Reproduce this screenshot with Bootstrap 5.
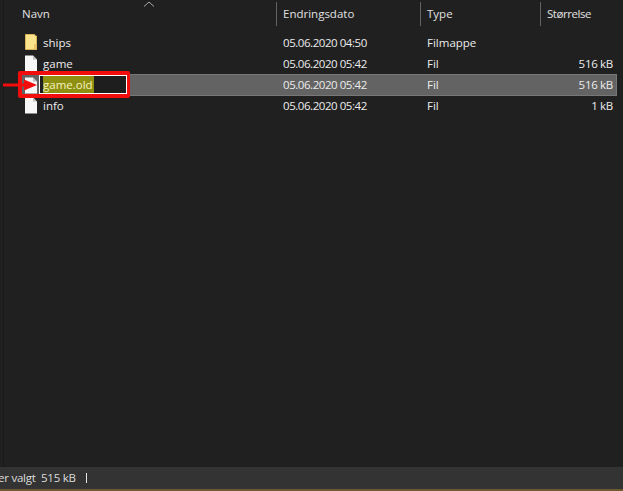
<!DOCTYPE html>
<html lang="no">
<head>
<meta charset="utf-8">
<title>Explorer</title>
<link href="https://cdn.jsdelivr.net/npm/bootstrap@5.3.0/dist/css/bootstrap.min.css" rel="stylesheet">
<style>
html,body{height:100%;margin:0;overflow:hidden}
body{background:#202020;color:#ececec;font:11.5px/1 "Open Sans",sans-serif}
.shell{height:491px;width:623px}
.main-area{flex:1 1 auto;border-left:1px solid #191919;margin-left:3px;position:relative;min-height:0}
.head-row{height:26px;padding-top:2px;color:#e0e0e0}
.cname{width:272px;padding-left:18px}
.cdate{width:144px;padding-left:6px}
.ctype{width:120px;padding-left:6px}
.csize{width:72px;padding-left:6px}
.sep{border-left:1px solid #636363}
.head-cell{height:24px;display:flex;align-items:center}
.head-cell.csize{letter-spacing:-.45px}
.rows{margin-top:6px}
.frow{height:21px;display:flex;align-items:center;width:613px}
.frow .cname{display:flex;align-items:center;padding-left:19px;width:279px;height:100%;flex:none}
.frow .cdate{width:144px;padding-left:0;letter-spacing:-.45px;flex:none}
.frow .ctype{width:120px;padding-left:0;flex:none}
.frow .csize{width:66px;padding:0;text-align:right;letter-spacing:-.3px;flex:none}
.frow.sel{background:#636363;box-shadow:inset 0 0 0 1px #777;margin-left:16px;width:597px;height:22px;margin-bottom:-1px}
.frow.sel .cname{padding-left:3px;width:263px}
.fname{margin-left:5px}
.icon{width:15px;height:17px;flex:none}
.rename{width:88px;height:19px;background:#1e1e1e;border:1px solid #fff;margin-left:1px;display:flex;align-items:center;padding-left:3px;align-self:flex-start;margin-top:1px}
.hl{background:#8f8f12;color:#f4f4c0;line-height:17px;padding:0 1px 0 0}
.redbox{position:absolute;left:18px;top:71px;width:112px;height:27px;border:4px solid #f20d0d;border-right-width:3px;border-radius:2px}
.arrowmark{position:absolute;left:0;top:79px;width:40px;height:12px}
.sort-mark{position:absolute;left:139px;top:1px;width:12px;height:6px}
.status{height:22px;flex:none;background:#333;color:#dcdcdc;overflow:hidden;white-space:nowrap}
.status-txt{margin-left:-2px;letter-spacing:-.25px}
.status-bar{width:1px;height:10px;background:#e6e6e6;margin-left:10px}
.bottom-edge{height:2px;flex:none;background:#6e5a30}
</style>
</head>
<body>
<div class="shell d-flex flex-column">
  <div class="main-area">
    <svg class="sort-mark" viewBox="0 0 12 6"><path d="M1 5.500 6 1l5 4.500" fill="none" stroke="#a8a8a8"/></svg>
    <div class="head-row d-flex">
      <div class="cname head-cell">Navn</div>
      <div class="cdate head-cell sep">Endringsdato</div>
      <div class="ctype head-cell sep">Type</div>
      <div class="csize head-cell sep">Størrelse</div>
    </div>
    <div class="rows">
      <div class="frow">
        <div class="cname"><svg class="icon" viewBox="0 0 15 17"><path d="M2.500.5h9l1 1.500h1v13.500h-11z" fill="#fde48c" stroke="#dcb45a"/><path d="M11.500 10.500h2v5h-2z" fill="#f0cb6a" stroke="#dcb45a" stroke-width=".6"/></svg><span class="fname">ships</span></div>
        <div class="cdate">05.06.2020 04:50</div><div class="ctype">Filmappe</div><div class="csize"></div>
      </div>
      <div class="frow">
        <div class="cname"><svg class="icon" viewBox="0 0 15 17"><path d="M2 .5h8l4 4v12H2z" fill="#f7f7f7"/><path d="M10 .5v4h4z" fill="#bdbdbd"/></svg><span class="fname">game</span></div>
        <div class="cdate">05.06.2020 05:42</div><div class="ctype">Fil</div><div class="csize">516 kB</div>
      </div>
      <div class="frow sel">
        <div class="cname"><svg class="icon" viewBox="0 0 15 17"><path d="M2 .5h8l4 4v12H2z" fill="#f7f7f7"/><path d="M10 .5v4h4z" fill="#bdbdbd"/></svg><div class="rename"><span class="hl">game.old</span></div></div>
        <div class="cdate">05.06.2020 05:42</div><div class="ctype">Fil</div><div class="csize">516 kB</div>
      </div>
      <div class="frow">
        <div class="cname"><svg class="icon" viewBox="0 0 15 17"><path d="M2 .5h8l4 4v12H2z" fill="#f7f7f7"/><path d="M10 .5v4h4z" fill="#bdbdbd"/></svg><span class="fname">info</span></div>
        <div class="cdate">05.06.2020 05:42</div><div class="ctype">Fil</div><div class="csize">1 kB</div>
      </div>
    </div>
  </div>
  <div class="redbox"></div>
  <svg class="arrowmark" viewBox="0 0 40 12"><path d="M3 6h22" stroke="#f20d0d" stroke-width="3"/><path d="M24 .5l13 5.500-13 5.500z" fill="#f20d0d"/></svg>
  <div class="status d-flex align-items-center"><span class="status-txt">er valgt&nbsp; 515 kB</span><span class="status-bar"></span></div>
  <div class="bottom-edge"></div>
</div>
</body>
</html>
